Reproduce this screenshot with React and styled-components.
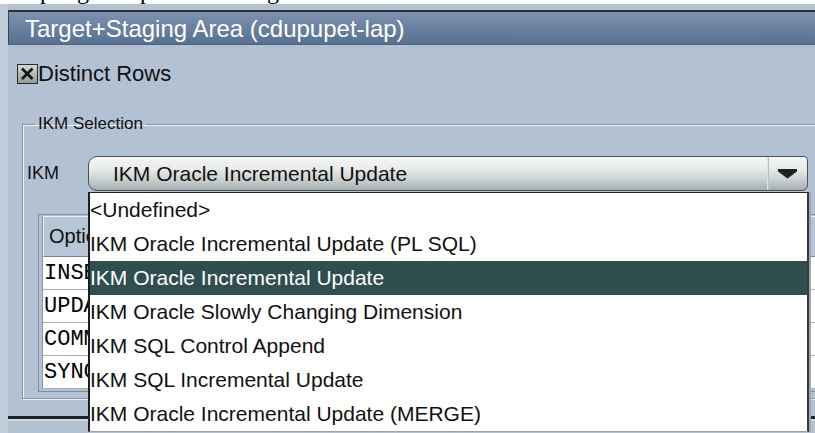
import React from "react";
import styled, { createGlobalStyle } from "styled-components";

const Global = createGlobalStyle`
  html, body { margin: 0; padding: 0; }
  body {
    background: #c0ccd9;
    overflow: hidden;
    font-family: "Liberation Sans", Arial, sans-serif;
  }
`;

const Page = styled.div`
  width: 815px;
  height: 433px;
  overflow: hidden;
  background: #c0ccd9;
`;

/* strip of document text above the window: only its descenders show */
const DocStrip = styled.div`
  height: 4px;
  background: #fff;
  overflow: hidden;
  display: flex;
  align-items: flex-start;
  font-family: "Liberation Serif", "Times New Roman", serif;
  font-size: 24px;
  line-height: 24px;
  color: #000;
`;

const DocGlyph = styled.span`
  margin-top: -21px;
  margin-left: ${(p) => p.$gap}px;
`;

const Window = styled.div`
  margin-left: 8px;
  width: 830px;
  height: 429px;
  padding-top: 6px;
  box-sizing: border-box;
  background: #b3c2d3;
`;

const TitleBar = styled.div`
  height: 33px;
  border-top: 2px solid #2b2f36;
  border-left: 1px solid #3d4656;
  background: linear-gradient(#7e92af 0%, #6a82a1 45%, #56708f 100%);
  box-shadow: inset 0 -1px 0 #4b6382;
  color: #fff;
  font-size: 24px;
  display: flex;
  align-items: center;
  padding-left: 16px;
`;

const Body = styled.div`
  padding-left: 9px;
`;

const CheckRow = styled.label`
  margin-top: 18px;
  height: 21px;
  display: flex;
  align-items: center;
  font-size: 22px;
  color: #111;
`;

const Group = styled.fieldset`
  margin: 30px 0 0 5px;
  padding: 0 0 6px 4px;
  border: 1px solid #8795a6;
  border-right: none;
  box-shadow: inset 1px 1px 0 #eef3f8, 1px 1px 0 #eef3f8;
`;

const GroupTitle = styled.legend`
  margin-left: 8px;
  padding: 0 3px;
  font-size: 17px;
  line-height: 20px;
  color: #111;
`;

const ComboRow = styled.div`
  margin-top: 22px;
  display: flex;
  align-items: center;
`;

const FieldLabel = styled.span`
  width: 61px;
  font-size: 18px;
  color: #111;
`;

const ComboWrap = styled.div`
  position: relative;
  z-index: 2;
`;

const Combo = styled.div`
  width: 720px;
  height: 35px;
  box-sizing: border-box;
  border: 1px solid #4b5258;
  border-radius: 9px 4px 6px 9px;
  background: linear-gradient(#f4f5f4 0%, #e9ecea 35%, #c6cecc 72%, #a3adab 100%);
  display: flex;
  align-items: center;
`;

const ComboText = styled.span`
  flex: 1;
  padding-left: 24px;
  font-size: 21px;
  color: #111;
`;

const ArrowButton = styled.span`
  width: 40px;
  height: 100%;
  box-sizing: border-box;
  border-left: 1px solid #dfe4e3;
  box-shadow: inset 1px 0 0 #b9c1bf;
  display: flex;
  align-items: center;
  justify-content: center;
`;

const Popup = styled.ul`
  position: absolute;
  top: calc(100% + 1px);
  left: 0;
  width: 721px;
  margin: 0;
  padding: 0;
  list-style: none;
  box-sizing: border-box;
  background: #fff;
  border-top: 1px solid #222;
  border-left: 2px solid #1e1e1e;
  border-right: 2px solid #3a3a3a;
  border-bottom: 1px solid #a0a0a0;
  box-shadow: 2px 0 0 #9da6b1;
`;

const Option = styled.li`
  height: 34px;
  display: flex;
  align-items: center;
  font-size: 21px;
  white-space: nowrap;
  color: ${(p) => (p.$active ? "#fff" : "#111")};
  background: ${(p) => (p.$active ? "#2f4f4f" : "transparent")};
`;

const TablePane = styled.div`
  margin: 23px 0 0 11px;
  height: 178px;
  box-sizing: border-box;
  border: 1px solid #7f8c9a;
  border-right: none;
  padding: 1px 0 3px 3px;
  background: #b3c2d3;
`;

const Grid = styled.div`
  border-left: 1px solid #8895a3;
  background: #fff;
`;

const HeadCell = styled.div`
  height: 41px;
  box-sizing: border-box;
  border-top: 1px solid #eef3f8;
  border-left: 1px solid #eef3f8;
  border-bottom: 1px solid #75828f;
  background: #b6c6d6;
  display: flex;
  align-items: center;
  padding-left: 5px;
  font-size: 20px;
  color: #111;
`;

const Cell = styled.div`
  height: 33px;
  box-sizing: border-box;
  border-bottom: 1px solid #a8b0b8;
  display: flex;
  align-items: center;
  padding-left: 1px;
  font-family: "Liberation Mono", "Courier New", monospace;
  font-size: 22px;
  color: #000;
  white-space: nowrap;
`;

const Divider = styled.div`
  margin-top: 17px;
  height: 3px;
  background: #1f2326;
  border-bottom: 2px solid #d3dbe4;
`;

function CheckMark() {
  return (
    <svg width="21" height="20" viewBox="0 0 21 20">
      <defs>
        <linearGradient id="boxFill" x1="0" y1="0" x2="0" y2="1">
          <stop offset="0" stopColor="#d3dbd8" />
          <stop offset="1" stopColor="#8f9c99" />
        </linearGradient>
      </defs>
      <rect x="0.5" y="0.5" width="20" height="19" fill="url(#boxFill)" stroke="#2a2a2a" />
      <path d="M5 4.5 L15.5 15 M15.5 4.5 L5 15" stroke="#151515" strokeWidth="2.6" />
    </svg>
  );
}

function DownArrow() {
  return (
    <svg width="19" height="10" viewBox="0 0 19 10">
      <path d="M0 0 H19 V2.5 L9.5 9.5 L0 2.5 Z" fill="#1c1f24" />
    </svg>
  );
}

const choices = [
  "<Undefined>",
  "IKM Oracle Incremental Update (PL SQL)",
  "IKM Oracle Incremental Update",
  "IKM Oracle Slowly Changing Dimension",
  "IKM SQL Control Append",
  "IKM SQL Incremental Update",
  "IKM Oracle Incremental Update (MERGE)",
];

const options = ["INSERT", "UPDATE", "COMMIT", "SYNC_JRN_DELETE"];

export default function App() {
  const selected = "IKM Oracle Incremental Update";
  return (
    <Page>
      <Global />
      <DocStrip>
        <DocGlyph $gap={40}>p</DocGlyph>
        <DocGlyph $gap={25}>g</DocGlyph>
        <DocGlyph $gap={51}>p</DocGlyph>
        <DocGlyph $gap={115}>g</DocGlyph>
      </DocStrip>
      <Window>
        <TitleBar>Target+Staging Area (cdupupet-lap)</TitleBar>
        <Body>
          <CheckRow>
            <CheckMark />
            Distinct Rows
          </CheckRow>
          <Group>
            <GroupTitle>IKM Selection</GroupTitle>
            <ComboRow>
              <FieldLabel>IKM</FieldLabel>
              <ComboWrap>
                <Combo>
                  <ComboText>{selected}</ComboText>
                  <ArrowButton>
                    <DownArrow />
                  </ArrowButton>
                </Combo>
                <Popup>
                  {choices.map((c) => (
                    <Option key={c} $active={c === selected}>
                      {c}
                    </Option>
                  ))}
                </Popup>
              </ComboWrap>
            </ComboRow>
            <TablePane>
              <Grid>
                <HeadCell>Option</HeadCell>
                {options.map((o) => (
                  <Cell key={o}>{o}</Cell>
                ))}
              </Grid>
            </TablePane>
          </Group>
        </Body>
        <Divider />
      </Window>
    </Page>
  );
}
